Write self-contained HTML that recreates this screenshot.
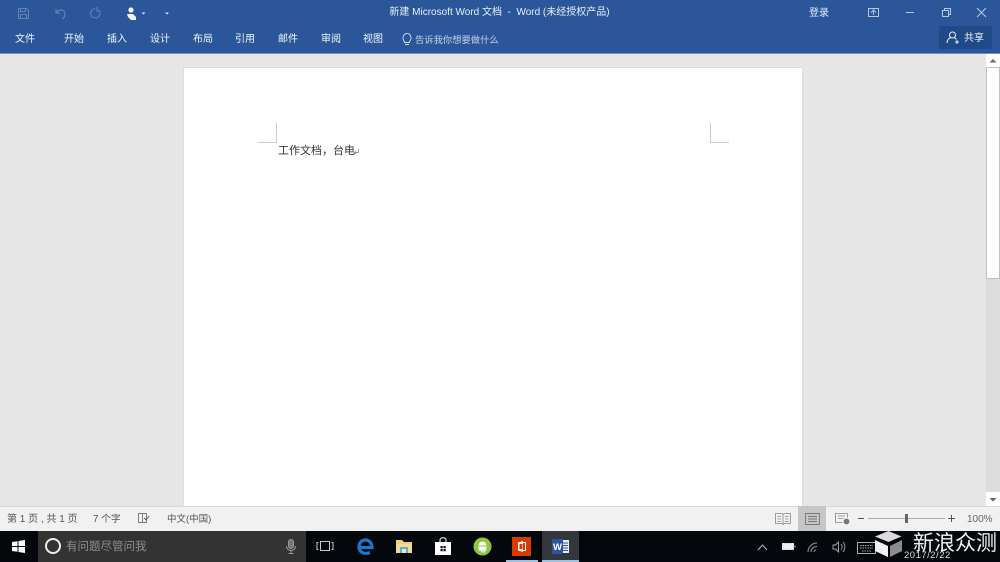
<!DOCTYPE html>
<html><head><meta charset="utf-8">
<style>
html,body{margin:0;padding:0;width:1000px;height:562px;overflow:hidden;background:#e6e6e6;font-family:"Liberation Sans","Noto Sans CJK SC",sans-serif}
.a{position:absolute;white-space:nowrap}
.m{top:33px;font-size:10px;line-height:14px;color:#f0f4fa;height:14px}
.s{top:513px;font-size:10px;line-height:14px;color:#555}
svg{position:absolute;overflow:visible}
</style></head><body>
<div class="a" style="left:0;top:0;width:1000px;height:53px;background:#2b579a"></div>
<div class="a" style="left:0;top:53px;width:1000px;height:1px;background:#6f8fc0"></div>

<!-- QAT -->
<svg style="left:0;top:0" width="180" height="26" fill="none">
<path d="M18.500 8.500h8l2 2v8h-10z M20.500 8.500v3h5v-3 M20.500 18.500v-4h6v4" stroke="#6483b3"/>
<path d="M56 9v4h4 M56 13c2-4 9-4 9 1 0 2-1 4-3 5" stroke="#6483b3" stroke-width="1.200"/>
<path d="M95 8.500c-4 1-5 4-4 6.500 1 3 6 4 8 1 1.500-2 1-4.500 0-6 M97 7v4h3" stroke="#6483b3" stroke-width="1.100"/>
<circle cx="131" cy="10" r="2.600" fill="#f2f5fa"/><path d="M127 14h6l3 3v3h-5l-3-3z" fill="#f2f5fa"/>
<path d="M141.500 12.500h4l-2 2z M165 12.500h4l-2 2z" fill="#dfe6f2"/>
</svg>

<div class="a" style="left:0;width:1000px;top:6px;text-align:center;font-size:10px;line-height:14px;color:#e8eef7;text-indent:-1px">新建 Microsoft Word 文档&nbsp; -&nbsp; Word (未经授权产品)</div>

<div class="a m" style="left:15px">文件</div>
<div class="a m" style="left:64px">开始</div>
<div class="a m" style="left:107px">插入</div>
<div class="a m" style="left:150px">设计</div>
<div class="a m" style="left:193px">布局</div>
<div class="a m" style="left:235px">引用</div>
<div class="a m" style="left:278px">邮件</div>
<div class="a m" style="left:321px">审阅</div>
<div class="a m" style="left:363px">视图</div>
<svg style="left:400px;top:31px" width="14" height="16" fill="none"><path d="M4.500 10.500c-3-3-1-8 2.500-8s5.500 5 2.500 8v1h-5z M5 13.500h4" stroke="#cfdbed" stroke-width=".9"/></svg>
<div class="a m" style="left:415px;color:#c3d1e6;font-size:9.300px">告诉我你想要做什么</div>

<div class="a" style="left:809px;top:7px;font-size:10px;line-height:14px;color:#e8eef7">登录</div>
<svg style="left:860px;top:0" width="130" height="26" fill="none" stroke="#b9c9e2">
<rect x="8.500" y="8.500" width="10" height="8"/><path d="M11 12.500l2.500-2.500 2.500 2.500 M13.500 10v5M8.500 8.500h10" />
<path d="M46 12.500h8"/>
<path d="M82.500 10.500h6v6h-6z M84.500 10.500v-2h6v6h-2"/>
<path d="M117 8l9 9M126 8l-9 9"/>
</svg>
<div class="a" style="left:939px;top:26px;width:53px;height:23px;background:#1f4a87"></div>
<svg style="left:946px;top:31px" width="16" height="14" fill="none" stroke="#e8eef7"><circle cx="6.500" cy="4" r="3"/><path d="M1 12c0-3 2-5 4-5.500M8 6.500c1 .3 2 1 2.500 2M9 11h4M11 9v4"/></svg>
<div class="a" style="left:964px;top:32px;font-size:10px;line-height:14px;color:#f0f4fa">共享</div>

<!-- page -->
<div class="a" style="left:184px;top:68px;width:618px;height:438px;background:#fff;box-shadow:0 0 0 1px #dcdcdc"></div>
<svg style="left:250px;top:115px" width="490" height="40" fill="none" stroke="#cbcbcb">
<path d="M26.500 8v19.500H8"/>
<path d="M460.500 8v19.500H479"/>
</svg>
<div class="a" style="left:278px;top:144px;font-size:11px;line-height:15px;color:#333">工作文档，台电</div>
<svg style="left:353px;top:148px" width="7" height="7" fill="none" stroke="#777" stroke-width=".7"><path d="M5.500 1v3.500H1.500M3 3L1.500 4.500 3 6"/></svg>

<!-- scrollbar -->
<div class="a" style="left:986px;top:54px;width:14px;height:452px;background:#dcdcdc"></div>
<div class="a" style="left:986px;top:54px;width:14px;height:13px;background:#fff"></div>
<div class="a" style="left:986px;top:67px;width:14px;height:212px;background:#fff;border:1px solid #c0c0c0;box-sizing:border-box"></div>
<div class="a" style="left:986px;top:492px;width:14px;height:14px;background:#fff"></div>
<svg style="left:986px;top:54px" width="14" height="452" fill="#666"><path d="M7 5l-3.500 3.500h7z M3.500 444h7L7 447.500z"/></svg>

<!-- status -->
<div class="a" style="left:0;top:506px;width:1000px;height:25px;background:#f1f1f1;border-top:1px solid #dadada;box-sizing:border-box"></div>
<div class="a s" style="left:7px">第 1 页 , 共 1 页</div>
<div class="a s" style="left:93px;font-size:9.800px">7 个字</div>
<svg style="left:137px;top:512px" width="14" height="12" fill="none" stroke="#777" stroke-width=".9"><path d="M1.500 1.500h8v9h-8z M5.500 1.500v9"/><path d="M7 6l2 2 3-4" stroke="#555"/></svg>
<div class="a s" style="left:167px;font-size:9.500px">中文(中国)</div>
<div class="a" style="left:798px;top:506px;width:28px;height:25px;background:#c6c6c6"></div>
<svg style="left:770px;top:506px" width="230" height="25" fill="none" stroke="#888">
<path d="M5.500 7.500h6.500l1 1 1-1h6.500v10h-6.500l-1 1-1-1h-6.500z M13 8.500v9 M7.500 10.500h3.500M7.500 13h3.500M7.500 15.500h3.500M15 10.500h3.500M15 13h3.500M15 15.500h3.500" stroke-width=".8"/>
<path d="M35.500 7.500h14v11h-14z M38 10.500h9M38 13h9M38 15.500h9" stroke="#777" stroke-width=".9"/>
<path d="M65.500 7.500h12v9h-12z M68 10h7M68 12.500h7" stroke-width=".8"/>
<circle cx="76.500" cy="15.500" r="3.500" fill="#777" stroke="#fff"/>
<path d="M88 12.500h6" stroke="#555"/>
<path d="M98 12.500h77" stroke="#aaa"/>
<rect x="135" y="8" width="3" height="9" fill="#666" stroke="none"/>
<path d="M178 12.500h7M181.500 9v7" stroke="#555"/>
</svg>
<div class="a s" style="left:967px;color:#666">100%</div>

<!-- taskbar -->
<div class="a" style="left:0;top:531px;width:1000px;height:31px;background:#04070c"></div>
<div class="a" style="left:38px;top:531px;width:268px;height:31px;background:#333"></div>
<svg style="left:12px;top:540px" width="13" height="13" fill="#fff"><path d="M0 2l5.500-.8v4.800H0z M6.500 1L13 0v6H6.500z M0 7h5.500v4.800L0 11z M6.500 7H13v6l-6.500-1z"/></svg>
<svg style="left:44px;top:537px" width="20" height="20" fill="none"><circle cx="9" cy="9" r="7" stroke="#eee" stroke-width="2"/></svg>
<div class="a" style="left:66px;top:539px;font-size:11.500px;line-height:16px;color:#8f8f8f">有问题尽管问我</div>
<svg style="left:285px;top:539px" width="12" height="16" fill="none" stroke="#9a9a9a"><rect x="3.500" y=".5" width="5" height="9" rx="2.500" fill="#777"/><path d="M1.500 7c0 6 9 6 9 0M6 12v3M3.500 14.500h5"/></svg>
<svg style="left:316px;top:540px" width="18" height="13" fill="none" stroke="#c8c8c8"><rect x="4.500" y="1.500" width="9" height="9"/><path d="M2.500 2.500h-1.500v7h1.500M15.500 2.500h1.500v7h-1.500"/></svg>
<!-- edge -->
<svg style="left:357px;top:537px" width="18" height="19" fill="none"><path d="M3 10.500h12c0-4-2.500-7.500-6.500-7.500C4.500 3 2 6 2 10c0 5 5 8 11 5.500" stroke="#1b77c9" stroke-width="3.200"/></svg>
<!-- explorer -->
<svg style="left:395px;top:538px" width="18" height="16"><path d="M1 2h6l2 2h8v11H1z" fill="#f5d06f"/><rect x="1" y="6" width="16" height="9" fill="#f3dc9a"/><rect x="5" y="9" width="8" height="6" fill="#5fb1cc"/><rect x="7" y="11" width="4" height="4" fill="#f3e6c0"/></svg>
<!-- store -->
<svg style="left:434px;top:537px" width="18" height="18"><path d="M1 5h16v13H1z" fill="#fff"/><path d="M6 6V3c0-3 6-3 6 0v3" fill="none" stroke="#fff"/><path d="M6.500 9h2.200v2.300H6.500zM9.500 9h2.200v2.300H9.500zM6.500 12h2.200v2.300H6.500zM9.500 12h2.200v2.300H9.500z" fill="#111"/></svg>
<!-- android -->
<svg style="left:473px;top:537px" width="19" height="19"><circle cx="9.500" cy="9.500" r="9" fill="#8cc63f"/><path d="M5.500 8.500a4 4 0 0 1 8 0z M5.500 9.500h8v4h-1.500v2h-1.500v-2h-1v2H8v-2H5.500z" fill="#fff"/></svg>
<!-- office -->
<div class="a" style="left:512px;top:537px;width:19px;height:19px;background:#d83b01"></div>
<svg style="left:512px;top:537px" width="19" height="19" fill="none"><path d="M6 5.500l5-1.500v11l-5-1.500z" fill="#fff"/><rect x="7.500" y="7" width="3" height="5" fill="#d83b01"/><path d="M11 5.500h2.500v8H11" stroke="#fff"/></svg>
<!-- word -->
<div class="a" style="left:542px;top:531px;width:37px;height:31px;background:#33373d"></div>
<svg style="left:552px;top:538px" width="18" height="17"><rect x="8" y="2" width="9" height="13" fill="#e8edf5"/><path d="M10 5h6M10 7.500h6M10 10h6M10 12.500h6" stroke="#2b579a"/><rect x="0" y="1" width="11" height="15" fill="#2b579a"/><text x="5.500" y="12" font-size="9.500" font-weight="bold" text-anchor="middle" fill="#fff" font-family="Liberation Sans">W</text></svg>
<!-- underline indicators -->
<div class="a" style="left:506px;top:560px;width:32px;height:2px;background:#9fc0dc"></div>
<div class="a" style="left:542px;top:560px;width:37px;height:2px;background:#9fc0dc"></div>

<!-- tray -->
<svg style="left:750px;top:531px" width="250" height="31" fill="none" stroke="#bbb">
<path d="M8 19l4.500-5 4.500 5"/>
<rect x="32.500" y="12.500" width="11" height="6" fill="#eee" stroke="#ddd"/><path d="M45 14.500v2"/>
<path d="M58 21c0-5 4-9 9-9M61 21c0-3 2-5.500 6-5.500M64 21c0-1 1-2 2-2" stroke="#999"/>
<path d="M83 14h2.500l3-3v10l-3-3H83z M91 13c1.500 2 1.500 4 0 6M93 11c2.500 3 2.500 7 0 10" stroke="#aaa" stroke-width=".9"/>
<rect x="107.500" y="11.500" width="18" height="11" stroke="#aaa"/>
<path d="M110 14.500h13M110 17h13M112 20h9" stroke="#aaa" stroke-dasharray="1.500 1"/>
</svg>
<!-- watermark -->
<svg style="left:875px;top:531px" width="28" height="26">
<path d="M13.500 0l13 5.500-13 5.500L0 5.500z" fill="#dcdcdc"/>
<path d="M0 9l13 6v11L0 20z" fill="#f2f2f2"/>
<path d="M27 9l-12 6v11l12-6z" fill="#8d8d8d"/>
</svg>
<div class="a" style="left:904px;top:550px;font-size:9.500px;line-height:11px;color:#ddd;letter-spacing:.5px">2017/2/22</div>
<div class="a" style="left:913px;top:530px;font-size:21px;line-height:28px;color:#f4f4f4">新浪众测</div>
</body></html>
